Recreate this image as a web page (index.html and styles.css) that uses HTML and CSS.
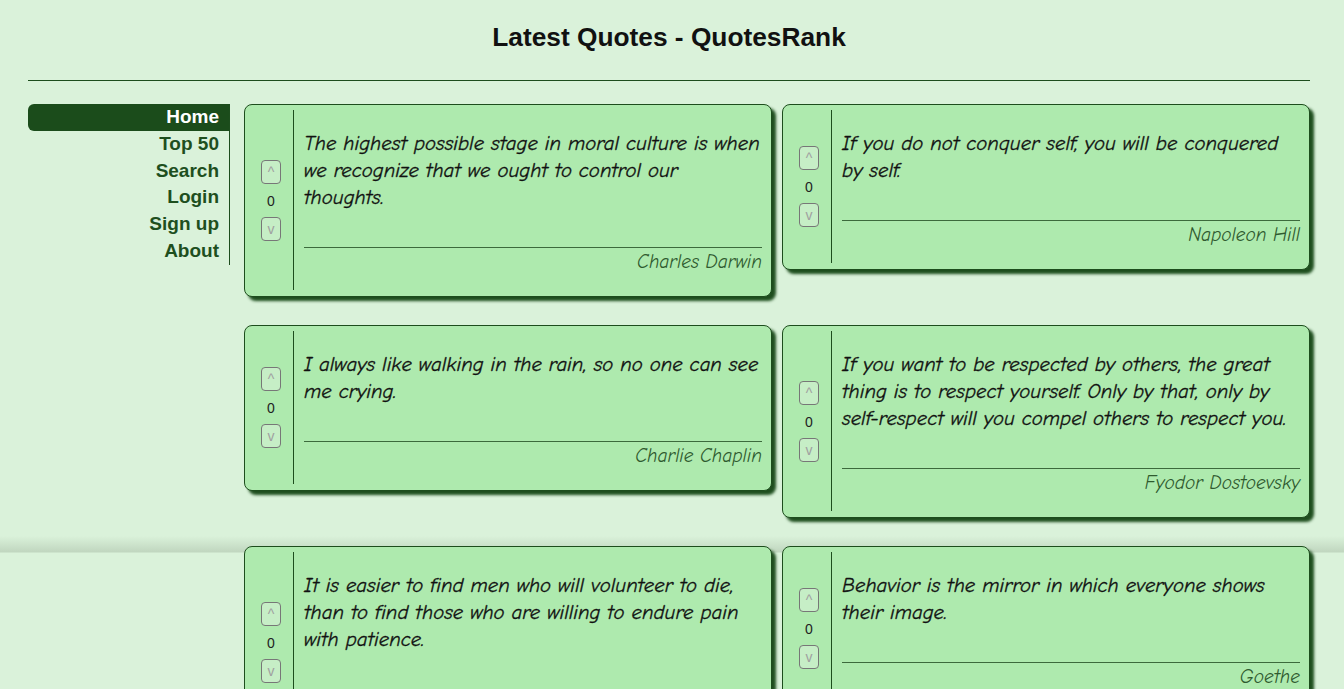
FILE: index.html
```html
<!DOCTYPE html>
<html lang="en">
<head>
<meta charset="utf-8">
<title>Latest Quotes - QuotesRank</title>
<link rel="stylesheet" href="styles.css">
</head>
<body>
<h1 class="title">Latest Quotes - QuotesRank</h1>
<hr class="rule">
<div class="layout">
  <nav class="nav">
    <a class="nav-item active" href="#">Home</a>
    <a class="nav-item" href="#">Top 50</a>
    <a class="nav-item" href="#">Search</a>
    <a class="nav-item" href="#">Login</a>
    <a class="nav-item" href="#">Sign up</a>
    <a class="nav-item" href="#">About</a>
  </nav>
  <div class="grid">
    <div class="card">
      <div class="vote"><button class="vote-btn">^</button><span class="score">0</span><button class="vote-btn">v</button></div>
      <div class="body"><p class="quote">The highest possible stage in moral culture is when we recognize that we ought to control our thoughts.</p><hr class="sep"><p class="author">Charles Darwin</p></div>
    </div>
    <div class="card">
      <div class="vote"><button class="vote-btn">^</button><span class="score">0</span><button class="vote-btn">v</button></div>
      <div class="body"><p class="quote">If you do not conquer self, you will be conquered by self.</p><hr class="sep"><p class="author">Napoleon Hill</p></div>
    </div>
    <div class="card">
      <div class="vote"><button class="vote-btn">^</button><span class="score">0</span><button class="vote-btn">v</button></div>
      <div class="body"><p class="quote">I always like walking in the rain, so no one can see me crying.</p><hr class="sep"><p class="author">Charlie Chaplin</p></div>
    </div>
    <div class="card">
      <div class="vote"><button class="vote-btn">^</button><span class="score">0</span><button class="vote-btn">v</button></div>
      <div class="body"><p class="quote">If you want to be respected by others, the great thing is to respect yourself. Only by that, only by self-respect will you compel others to respect you.</p><hr class="sep"><p class="author">Fyodor Dostoevsky</p></div>
    </div>
    <div class="card">
      <div class="vote"><button class="vote-btn">^</button><span class="score">0</span><button class="vote-btn">v</button></div>
      <div class="body"><p class="quote">It is easier to find men who will volunteer to die, than to find those who are willing to endure pain with patience.</p><hr class="sep"><p class="author">Napoleon Bonaparte</p></div>
    </div>
    <div class="card">
      <div class="vote"><button class="vote-btn">^</button><span class="score">0</span><button class="vote-btn">v</button></div>
      <div class="body"><p class="quote">Behavior is the mirror in which everyone shows their image.</p><hr class="sep"><p class="author">Goethe</p></div>
    </div>
  </div>
</div>
</body>
</html>
```
FILE: styles.css
```css
html {
  min-height: 100%;
  background: linear-gradient(to bottom, #daf2da 0, #daf2da 536px, #c0d6bf 552px, #daf2da 553px, #daf2da 100%);
  background-color: #daf2da;
}
body {
  margin: 0;
  padding: 0 34px 40px 28px;
  font-family: "Liberation Sans", Arial, sans-serif;
  color: #111;
}
.title {
  margin: 22px 0 0;
  font-size: 26.3px;
  line-height: 30px;
  font-weight: bold;
  text-align: center;
  color: #111;
}
.rule {
  margin: 28px 0 0;
  border: 0;
  border-top: 1px solid #1d4d1d;
  height: 0;
}
.layout {
  display: flex;
  align-items: flex-start;
  margin-top: 23px;
}
.nav {
  width: 201px;
  flex: none;
  border-right: 1px solid #1d4d1d;
  margin-right: 14px;
  display: flex;
  flex-direction: column;
}
.nav-item {
  display: block;
  text-align: right;
  padding-right: 10px;
  font-size: 19px;
  font-weight: bold;
  line-height: 26.8px;
  color: #1e4f1e;
  text-decoration: none;
}
.nav-item.active {
  background: #1b4c1b;
  color: #fff;
  border-radius: 6px 0 0 6px;
}
.grid {
  display: grid;
  grid-template-columns: 528px 528px;
  column-gap: 10px;
  row-gap: 28px;
  align-items: start;
}
.card {
  display: flex;
  background: #aeeaae;
  border: 1px solid #1d4d1d;
  border-radius: 8px;
  box-shadow: 4px 4px 3px #1e4e1e;
  padding: 5px 0 6px;
}
.vote {
  width: 44px;
  padding-left: 4px;
  flex: none;
  border-right: 1px solid #1d4d1d;
  display: flex;
  flex-direction: column;
  align-items: center;
  justify-content: center;
}
.vote-btn {
  width: 20px;
  height: 24px;
  padding: 0;
  border: 1px solid #777;
  border-radius: 4px;
  background: #c6eec6;
  color: #a0a0a0;
  font-family: "Liberation Sans", Arial, sans-serif;
  font-size: 14px;
  line-height: 20px;
}
.score {
  font-size: 14px;
  line-height: 16px;
  margin: 9px 0 8px;
  color: #222;
}
.body {
  flex: 1;
  padding: 0 9px 0 10px;
}
.quote {
  margin: 0;
  padding-top: 20px;
  font-family: "Comic Sans MS", "Comic Neue", "Liberation Sans", sans-serif;
  font-style: italic;
  font-size: 20.8px;
  line-height: 27px;
  color: #111;
  -webkit-text-stroke: 0.3px #111;
}
.sep {
  margin: 36px 0 0;
  border: 0;
  border-top: 1px solid #3c6a3c;
  height: 0;
}
.author {
  margin: 2px 0 0;
  padding-bottom: 16px;
  text-align: right;
  font-family: "Comic Sans MS", "Comic Neue", "Liberation Sans", sans-serif;
  font-style: italic;
  font-size: 19.4px;
  line-height: 24px;
  color: #2f5a2f;
}
```
